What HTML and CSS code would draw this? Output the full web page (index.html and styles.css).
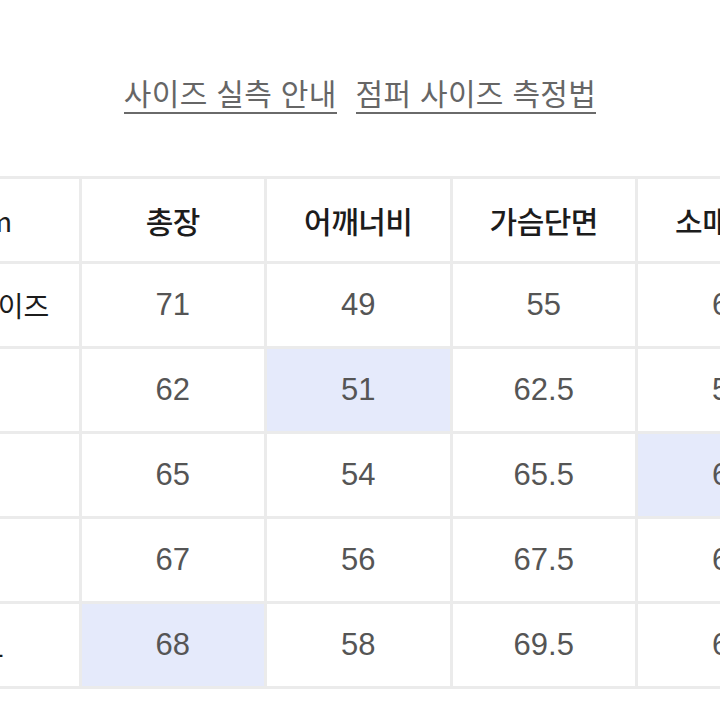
FILE: index.html
```html
<!DOCTYPE html>
<html lang="ko">
<head>
<meta charset="utf-8">
<title>사이즈 실측 안내</title>
<link rel="stylesheet" href="styles.css">
</head>
<body>
<div class="page">
  <nav class="links">
    <a class="link" href="#">사이즈 실측 안내</a>
    <a class="link" href="#">점퍼 사이즈 측정법</a>
  </nav>
  <div class="table-wrap">
    <table class="size-table">
      <colgroup>
        <col class="c"><col class="c"><col class="c"><col class="c"><col class="c">
      </colgroup>
      <thead>
        <tr>
          <th class="label">cm</th>
          <th>총장</th>
          <th>어깨너비</th>
          <th>가슴단면</th>
          <th>소매길이</th>
        </tr>
      </thead>
      <tbody>
        <tr>
          <td class="label">사이즈</td>
          <td>71</td><td>49</td><td>55</td><td>64</td>
        </tr>
        <tr>
          <td class="label">S</td>
          <td>62</td><td class="hl">51</td><td>62.5</td><td>59</td>
        </tr>
        <tr>
          <td class="label">M</td>
          <td>65</td><td>54</td><td>65.5</td><td class="hl">61</td>
        </tr>
        <tr>
          <td class="label">L</td>
          <td>67</td><td>56</td><td>67.5</td><td>62</td>
        </tr>
        <tr>
          <td class="label">XL</td>
          <td class="hl">68</td><td>58</td><td>69.5</td><td>63</td>
        </tr>
      </tbody>
    </table>
  </div>
</div>
</body>
</html>
```

FILE: styles.css
```css
html, body {
  margin: 0;
  padding: 0;
  background: #ffffff;
}

.page {
  width: 720px;
  height: 720px;
  overflow: hidden;
  font-family: "Noto Sans CJK KR", "Noto Sans", sans-serif;
}

.links {
  display: flex;
  justify-content: center;
  gap: 19px;
  padding-top: 73px;
}

.link {
  color: #666666;
  font-size: 30px;
  line-height: 38px;
  letter-spacing: 0.3px;
  text-decoration: none;
  border-bottom: 2px solid #6a6a6a;
  padding-bottom: 1px;
}

.table-wrap {
  margin-top: 62px;
  width: 720px;
  overflow: hidden;
}

.size-table {
  margin-left: -107px;
  border-collapse: collapse;
  table-layout: fixed;
  width: 929px;
}

.size-table .c {
  width: 185.5px;
}

.size-table th,
.size-table td {
  border: 3px solid #ebebeb;
  height: 82px;
  padding: 0;
  text-align: center;
  vertical-align: middle;
  background: #ffffff;
}

.size-table th {
  color: #1c1c1c;
  font-size: 30px;
  font-weight: 500;
  letter-spacing: -0.5px;
}

.size-table td {
  color: #555555;
  font-family: "Liberation Sans", "Noto Sans CJK KR", sans-serif;
  font-size: 31px;
}

.size-table .label {
  text-align: left;
  padding-left: 76px;
  color: #1c1c1c;
  font-family: "Noto Sans CJK KR", sans-serif;
  font-size: 28px;
  font-weight: 400;
  letter-spacing: 0;
}

.size-table .hl {
  background: #e5eafb;
}
```
